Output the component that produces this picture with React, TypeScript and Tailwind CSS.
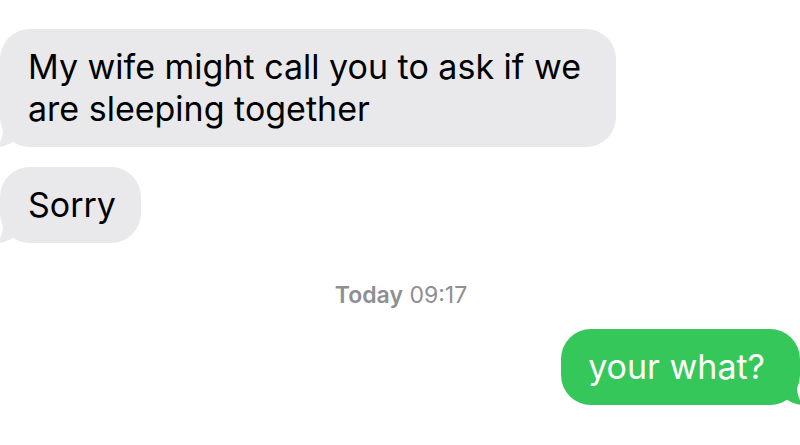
import React from "react";

function TailLeft({ color }: { color: string }) {
  return (
    <svg
      className="absolute bottom-0 left-[-4px]"
      width="20"
      height="20"
      viewBox="0 0 20 20"
    >
      <path d="M20 0 L20 12 Q12 20 0 20 Q7 15 7 0 Z" fill={color} />
    </svg>
  );
}

function TailRight({ color }: { color: string }) {
  return (
    <svg
      className="absolute bottom-0 right-[-4px]"
      width="20"
      height="20"
      viewBox="0 0 20 20"
    >
      <path d="M0 0 L0 12 Q8 20 20 20 Q13 15 13 0 Z" fill={color} />
    </svg>
  );
}

export default function App() {
  return (
    <div
      className="w-[800px] h-[445px] bg-white overflow-hidden flex flex-col"
      style={{ fontFamily: "Inter, 'Liberation Sans', sans-serif" }}
    >
      <div className="pt-[29px] flex flex-col items-start gap-[20px]">
        <div className="relative bg-[#e9e9eb] rounded-[30px] pl-[28px] pr-[35px] py-[17px] text-[34px] leading-[42px] text-black">
          My wife might call you to ask if we
          <br />
          are sleeping together
          <TailLeft color="#e9e9eb" />
        </div>
        <div className="relative bg-[#e9e9eb] rounded-[30px] pl-[28px] pr-[25px] py-[17px] text-[34px] leading-[42px] text-black">
          Sorry
          <TailLeft color="#e9e9eb" />
        </div>
      </div>
      <div className="mt-[39px] text-center text-[23px] leading-[26px] text-[#8e8e93] pl-[2px]">
        <span className="font-semibold">Today</span> 09:17
      </div>
      <div className="mt-[21px] flex justify-end">
        <div className="relative bg-[#35c759] rounded-[30px] pl-[27px] pr-[35px] py-[17px] text-[34px] leading-[42px] text-white">
          your what?
          <TailRight color="#35c759" />
        </div>
      </div>
    </div>
  );
}
